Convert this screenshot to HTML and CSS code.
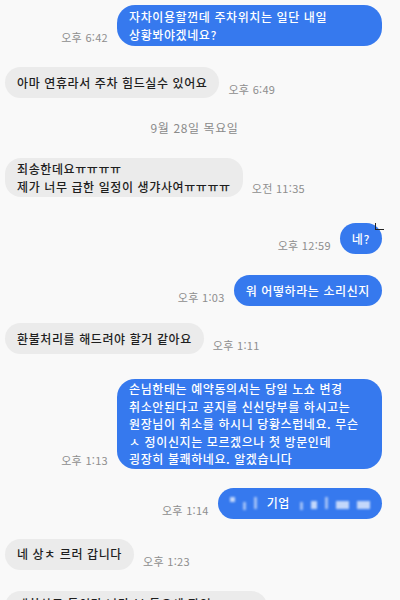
FILE: index.html
```html
<!DOCTYPE html>
<html lang="ko">
<head>
    <meta charset="UTF-8">
    <meta name="viewport" content="width=device-width, initial-scale=1.0">
    <title>메시지</title>
    <link rel="stylesheet" href="styles.css">
</head>
<body>
    <div class="chat">
        <div class="row sent">
            <span class="time">오후 6:42</span>
            <div class="bubble wide">자차이용할껀데 주차위치는 일단 내일<br>상황봐야겠네요?</div>
        </div>

        <div class="row received gap-21">
            <div class="bubble">아마 연휴라서 주차 힘드실수 있어요</div>
            <span class="time">오후 6:49</span>
        </div>

        <div class="date">9월 28일 목요일</div>

        <div class="row received">
            <div class="bubble multi">죄송한데요ㅠㅠㅠㅠ<br>제가 너무 급한 일정이 생갸사여ㅠㅠㅠㅠ</div>
            <span class="time">오전 11:35</span>
        </div>

        <div class="row sent gap-26 marked">
            <span class="time">오후 12:59</span>
            <div class="bubble">네?</div>
            <span class="cursor-mark"></span>
        </div>

        <div class="row sent gap-21">
            <span class="time">오후 1:03</span>
            <div class="bubble">워 어떻하라는 소리신지</div>
        </div>

        <div class="row received gap-17">
            <div class="bubble">환불처리를 해드려야 할거 같아요</div>
            <span class="time">오후 1:11</span>
        </div>

        <div class="row sent gap-25">
            <span class="time">오후 1:13</span>
            <div class="bubble wide long">손님한테는 예약동의서는 당일 노쇼 변경<br>취소안된다고 공지를 신신당부를 하시고는<br>원장님이 취소를 하시니 당황스럽네요. 무슨<br>ㅅ 정이신지는 모르겠으나 첫 방문인데<br>굉장히 불쾌하네요. 알겠습니다</div>
        </div>

        <div class="row sent gap-19">
            <span class="time">오후 1:14</span>
            <div class="bubble blurred">
                <span class="px dot"></span>
                <span class="px bar short"></span>
                <span class="px bar"></span>
                <span class="word">기업</span>
                <span class="px bar short"></span>
                <span class="px blob"></span>
                <span class="px bar"></span>
                <span class="px wide-blob"></span>
                <span class="px wide-blob"></span>
            </div>
        </div>

        <div class="row received gap-20">
            <div class="bubble">네 상ㅊ 르러 갑니다</div>
            <span class="time">오후 1:23</span>
        </div>

        <div class="row received gap-21">
            <div class="bubble last">대한상도 톡이라 나라 보 들으세 잘인 .</div>
        </div>
    </div>
</body>
</html>
```

FILE: styles.css
```css
* {
    margin: 0;
    padding: 0;
    box-sizing: border-box;
}

body {
    width: 400px;
    height: 600px;
    overflow: hidden;
    background-color: #f9f9f9;
    font-family: "Noto Sans CJK KR", "Noto Sans", sans-serif;
    color: #1e1e1e;
}

.chat {
    display: flex;
    flex-direction: column;
    padding: 5px 18px 0 5px;
}

.row {
    display: flex;
    align-items: flex-end;
    gap: 9px;
}

.row.sent {
    justify-content: flex-end;
}

.gap-17 { margin-top: 17px; }
.gap-19 { margin-top: 19px; }
.gap-20 { margin-top: 20px; }
.gap-21 { margin-top: 21px; }
.gap-25 { margin-top: 25px; }
.gap-26 { margin-top: 26px; }

.bubble {
    min-height: 31px;
    padding: 4px 12px;
    border-radius: 16px;
    font-size: 12px;
    font-weight: 500;
    letter-spacing: 0.6px;
    line-height: 17.5px;
    display: flex;
    align-items: center;
    white-space: nowrap;
}

.sent .bubble {
    background-color: #3679ee;
    color: #ffffff;
}

.received .bubble {
    background-color: #ebebeb;
    color: #1e1e1e;
}

.bubble.multi {
    padding: 2px 12px;
}

.bubble.wide {
    width: 265px;
    padding: 3px 12px;
    border-radius: 18px;
}

.bubble.long {
    padding: 1px 12px;
}

.bubble.last {
    width: 262px;
    align-items: flex-start;
    padding-top: 4px;
}

.time {
    font-size: 11px;
    line-height: 13px;
    letter-spacing: 0.3px;
    color: #8e8e8e;
    padding-bottom: 2px;
    white-space: nowrap;
}

.date {
    margin: 22px 0;
    text-align: center;
    font-size: 12px;
    letter-spacing: 0.6px;
    line-height: 16px;
    color: #8a8a8a;
    padding-left: 2px;
}

/* tap marker left on the screenshot */
.marked {
    position: relative;
}

.cursor-mark {
    position: absolute;
    right: -2px;
    top: 0;
    width: 9px;
    height: 7px;
    border-left: 1px solid #222;
    border-bottom: 1px solid #222;
}

/* blurred censor blocks */
.blurred {
    gap: 8px;
    padding: 4px 12px;
}

.px {
    display: inline-block;
    background-color: rgba(255, 255, 255, 0.7);
    filter: blur(1px);
}

.dot { width: 5px; height: 5px; margin-top: -8px; }
.bar { width: 3px; height: 12px; opacity: 0.75; }
.bar.short { height: 8px; margin-top: 6px; }
.blob { width: 6px; height: 8px; margin-top: 4px; }
.wide-blob { width: 13px; height: 8px; margin-top: 3px; }

.word {
    font-size: 12px;
    margin: 0 2px;
}
```
